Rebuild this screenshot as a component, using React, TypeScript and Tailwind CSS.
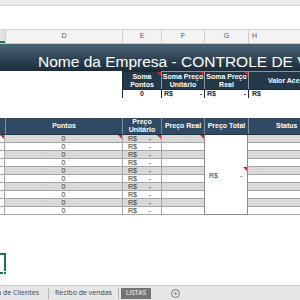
const COLS = 'grid grid-cols-[5px_117px_39px_43px_44px_1fr]'

function Marker() {
  return (
    <span className="absolute top-0 right-0 w-0 h-0 border-t-[4px] border-l-[4px] border-t-[#e0201b] border-l-transparent" />
  )
}

const ROWS = Array.from({ length: 10 }, (_, i) => i)

export default function App() {
  return (
    <div className="w-[300px] h-[300px] overflow-hidden bg-white flex flex-col font-['Liberation_Sans',Arial,sans-serif] text-[#222]">
      {/* ribbon edge + formula bar */}
      <div className="h-[6px] bg-[#e9e9e9] border-b border-[#d4d4d4]" />
      <div className="h-[24px] bg-white border-b border-[#d4d4d4]" />

      {/* column letters */}
      <div className={`${COLS} h-[14px] bg-[#f3f3f3] border-b border-[#c8c8c8] text-[7px] text-[#555]`}>
        <div className="border-b-2 border-[#217346] bg-[#e2e2e2]" />
        <div className="border-l border-[#d0d0d0] flex items-center justify-center">D</div>
        <div className="border-l border-[#d0d0d0] flex items-center justify-center">E</div>
        <div className="border-l border-[#d0d0d0] flex items-center justify-center">F</div>
        <div className="border-l border-[#d0d0d0] flex items-center justify-center">G</div>
        <div className="border-l border-[#d0d0d0] flex items-center justify-center pr-[40px]">H</div>
      </div>

      {/* title band */}
      <div className="h-[27px] bg-gradient-to-b from-[#4a6376] to-[#1b2c3a] pt-[6px] pl-[38px] whitespace-nowrap overflow-hidden">
        <span className="text-[15.5px] leading-[16px] text-white">Nome da Empresa - CONTROLE DE VENDAS</span>
      </div>

      {/* summary header */}
      <div className={`${COLS} h-[18px] text-[7px] leading-[8px] font-bold text-white`}>
        <div className="col-span-2 bg-white" />
        <div className="relative bg-[#253847] border-l border-t border-[#1b2a36] flex items-center justify-center text-center">
          Soma<br />Pontos
          <Marker />
        </div>
        <div className="relative bg-[#253847] border-l border-t border-[#8a98a4] flex items-center justify-center text-center">
          Soma Preço<br />Unitário
          <Marker />
        </div>
        <div className="relative bg-[#253847] border-l border-t border-[#8a98a4] flex items-center justify-center text-center">
          Soma Preço<br />Real
          <Marker />
        </div>
        <div className="bg-[#253847] border-l border-t border-[#8a98a4] flex items-center pl-[19px] whitespace-nowrap overflow-hidden">
          Valor Acertado
        </div>
      </div>
      <div className={`${COLS} h-[9px] text-[7px] leading-[8px] font-bold text-[#1b2a36]`}>
        <div className="col-span-2 bg-white border-b border-[#c8c8c8]" />
        <div className="border-l border-t border-b border-[#1b2a36] flex items-center justify-center">0</div>
        <div className="border-l border-t border-b border-[#1b2a36] flex items-center justify-between px-[2px]">
          <span>R$</span><span>-</span>
        </div>
        <div className="border-l border-t border-b border-[#1b2a36] flex items-center justify-between px-[2px]">
          <span>R$</span><span>-</span>
        </div>
        <div className="border-l border-t border-b border-[#1b2a36] flex items-center px-[3px]">R$</div>
      </div>

      <div className="h-[20px] bg-white" />

      {/* table header */}
      <div className={`${COLS} h-[17px] bg-[#2f4a62] text-[7px] leading-[8px] font-bold text-white border-b border-[#1f3447]`}>
        <div />
        <div className="border-l border-[#7d91a3] flex items-center justify-center">Pontos</div>
        <div className="border-l border-[#7d91a3] flex items-center justify-center text-center">Preço<br />Unitário</div>
        <div className="border-l border-[#7d91a3] flex items-center justify-center">Preço Real</div>
        <div className="border-l border-[#7d91a3] flex items-center justify-center">Preço Total</div>
        <div className="border-l border-[#7d91a3] flex items-center pl-[27px]">Status</div>
      </div>

      {/* data rows */}
      <div className={`${COLS} grid-rows-[repeat(10,8px)] text-[7px] leading-[7px] text-[#333]`}>
        {ROWS.map((i) => {
          const band = i % 2 === 0 ? 'bg-[#d9d9d9]' : 'bg-white'
          const line = 'border-b border-[#a6a6a6]'
          return [
            <div key={`a${i}`} className={`relative col-start-1 bg-white ${line} border-r border-[#8c8c8c]`}>
              {i === 0 && <Marker />}
            </div>,
            <div key={`d${i}`} className={`relative col-start-2 ${band} ${line} flex items-center justify-center`}>
              0
              {i === 0 && <Marker />}
            </div>,
            <div key={`e${i}`} className={`relative col-start-3 ${band} ${line} border-l border-[#8c8c8c] flex items-center justify-between pl-[5px] pr-[10px]`}>
              <span>R$</span>
              <span>-</span>
              {i === 0 && <Marker />}
            </div>,
            <div key={`f${i}`} className={`relative col-start-4 ${band} ${line} border-l border-[#8c8c8c]`}>
              {i === 0 && <Marker />}
            </div>,
            i === 0 ? (
              <div key="g" className="relative col-start-5 row-start-1 row-span-10 bg-white border-l border-r border-b border-[#8c8c8c] flex items-center pl-[4px] pt-[2px]">
                <span>R$</span>
                <span className="ml-[22px]">-</span>
                <span className="absolute right-0 top-[32px] w-0 h-0 border-t-[4px] border-l-[4px] border-t-[#e0201b] border-l-transparent" />
              </div>
            ) : null,
            <div key={`h${i}`} className={`col-start-6 ${band} ${line}`} />,
          ]
        })}
      </div>

      {/* empty sheet area with selected cell */}
      <div className="flex-1 bg-white pt-[38px]">
        <div className="relative w-[6px] h-[21px] border-2 border-l-0 border-[#217346]">
          <span className="absolute -right-[3px] -bottom-[3px] w-[4px] h-[4px] bg-[#217346] border border-white" />
        </div>
      </div>

      {/* sheet tabs */}
      <div className="h-[15px] bg-[#e6e6e6] border-t border-[#c6c6c6] flex items-center text-[7px] text-[#444] font-['Open_Sans',sans-serif] whitespace-nowrap">
        <div className="w-[48px] overflow-hidden flex justify-end pr-[9px]">
          <span className="shrink-0">Lista de Clientes</span>
        </div>
        <div className="h-[11px] border-l border-[#b5b5b5]" />
        <div className="w-[69px] overflow-hidden pl-[6px]">Recibo de vendas</div>
        <div className="h-[11px] border-l border-[#b5b5b5]" />
        <div className="ml-[2px] h-[11px] w-[30px] bg-[#747474] text-white flex items-center justify-center text-[6.5px]">LISTAS</div>
        <div className="ml-[20px] w-[9px] h-[9px] rounded-full border border-[#777] flex items-center justify-center text-[8px] leading-[8px] text-[#666]">+</div>
      </div>
    </div>
  )
}
